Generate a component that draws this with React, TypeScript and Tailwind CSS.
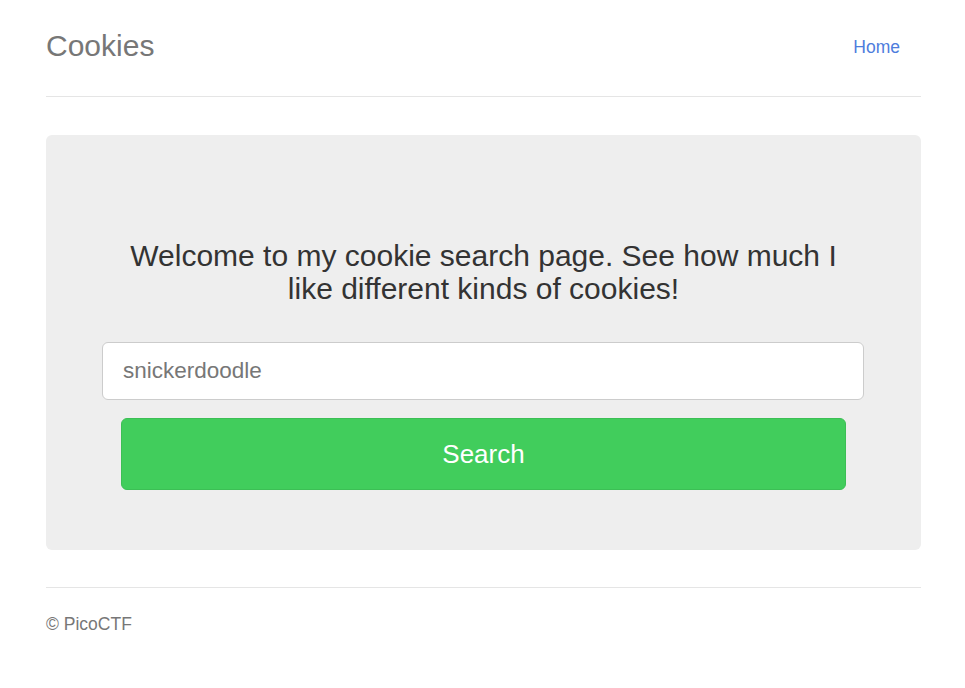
import React from "react";

export default function App() {
  return (
    <div className="min-h-[688px] bg-white" style={{ fontFamily: '"Liberation Sans", Arial, sans-serif' }}>
      <div className="ml-[46px] w-[875px]">
        <div className="flex h-[97px] items-center justify-between border-b border-[#e5e5e5]">
          <h3 className="text-[30px] leading-none text-[#777] pb-[4px]">Cookies</h3>
          <a className="mr-[21px] text-[17.5px] leading-none text-[#4e7ddd]">Home</a>
        </div>
        <div className="mt-[38px] h-[415px] rounded-[6px] bg-[#eeeeee] px-[56px] pt-[104px]">
          <h3 className="px-[25px] text-center text-[30px] leading-[33px] text-[#333]">
            Welcome to my cookie search page. See how much I like different kinds of cookies!
          </h3>
          <div className="mt-[37px] flex h-[58px] w-[762px] items-center rounded-[6px] border border-[#ccc] bg-white px-[20px] text-[22.5px] text-[#777]">
            snickerdoodle
          </div>
          <div className="ml-[19px] mt-[18px] flex h-[72px] w-[725px] items-center justify-center rounded-[6px] border border-[#3cbf55] bg-[#41cd5c] text-[26px] text-white">
            Search
          </div>
        </div>
        <div className="mt-[37px] border-t border-[#e5e5e5] pt-[28px] text-[17.5px] leading-none text-[#777]">
          © PicoCTF
        </div>
      </div>
    </div>
  );
}
